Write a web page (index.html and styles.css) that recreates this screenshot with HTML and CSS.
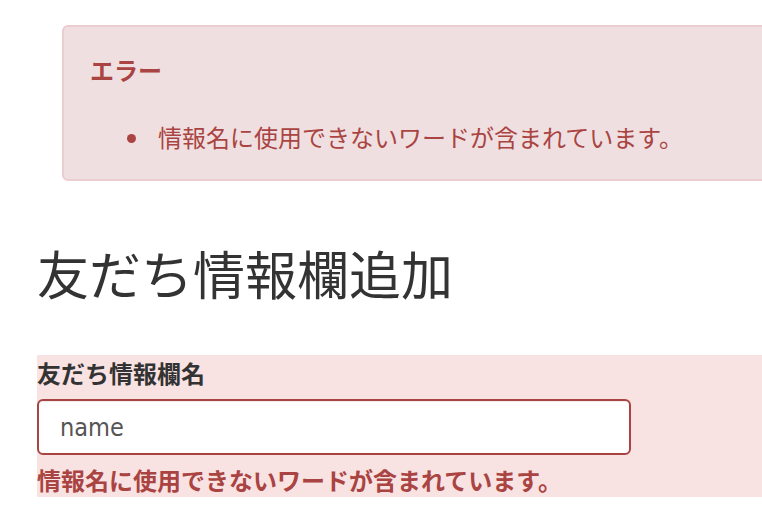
FILE: index.html
```html
<!DOCTYPE html>
<html lang="ja">
<head>
<meta charset="utf-8">
<title>友だち情報欄追加</title>
<link rel="stylesheet" href="styles.css">
</head>
<body>
<div class="page">
  <div class="alert">
    <h4 class="alert-title">エラー</h4>
    <ul class="alert-list">
      <li>情報名に使用できないワードが含まれています。</li>
    </ul>
  </div>
  <h1 class="page-title">友だち情報欄追加</h1>
  <div class="field has-error">
    <label class="field-label" for="name">友だち情報欄名</label>
    <input class="field-input" id="name" type="text" value="name">
    <p class="field-error">情報名に使用できないワードが含まれています。</p>
  </div>
  <div class="field">
    <label class="field-label">説明</label>
  </div>
</div>
</body>
</html>
```
FILE: styles.css
```css
html, body {
  margin: 0;
  padding: 0;
  background: #fff;
  overflow: hidden;
}

body {
  font-family: "Noto Sans CJK JP", "Noto Sans", sans-serif;
  color: #333;
}

.page {
  width: 1000px;
  padding: 25px 0 0 37px;
}

.alert {
  margin-left: 25px;
  border: 2px solid #ebccd1;
  border-radius: 6px;
  background: #f0dfe0;
  color: #a94442;
  padding: 25px 26px 24px 26px;
}

.alert-title {
  margin: 0;
  font-size: 24px;
  line-height: 36px;
  font-weight: 700;
}

.alert-list {
  margin: 31px 0 0;
  padding: 0;
  list-style: none;
}

.alert-list li {
  display: flex;
  align-items: center;
  padding-left: 37px;
  font-size: 24px;
  line-height: 36px;
  font-weight: 400;
}

.alert-list li::before {
  content: "";
  flex: none;
  width: 9px;
  height: 9px;
  border-radius: 50%;
  background: currentColor;
  margin-right: 22px;
  margin-top: 2px;
}

.page-title {
  margin: 61px 0 51px;
  font-size: 52px;
  line-height: 62px;
  font-weight: 400;
  color: #333;
}

.field {
  display: flex;
  flex-direction: column;
  align-items: flex-start;
}

.field.has-error {
  background: #f9e2e2;
}

.field-label {
  display: block;
  font-size: 24px;
  line-height: 36px;
  font-weight: 700;
  color: #333;
}

.field + .field {
  margin-top: 27px;
}

.field-input {
  box-sizing: border-box;
  width: 594px;
  height: 56px;
  margin: 8px 0 0;
  padding: 0 21px;
  border: 2px solid #a94442;
  border-radius: 6px;
  background: #fff;
  box-shadow: inset 0 1px 1px rgba(0, 0, 0, 0.075);
  font-family: "DejaVu Sans Condensed", "DejaVu Sans", sans-serif;
  font-stretch: condensed;
  font-size: 25px;
  color: #555;
  outline: none;
}

.field-error {
  margin: 7px 0 0;
  font-size: 24px;
  line-height: 35px;
  font-weight: 700;
  color: #a94442;
}
```
